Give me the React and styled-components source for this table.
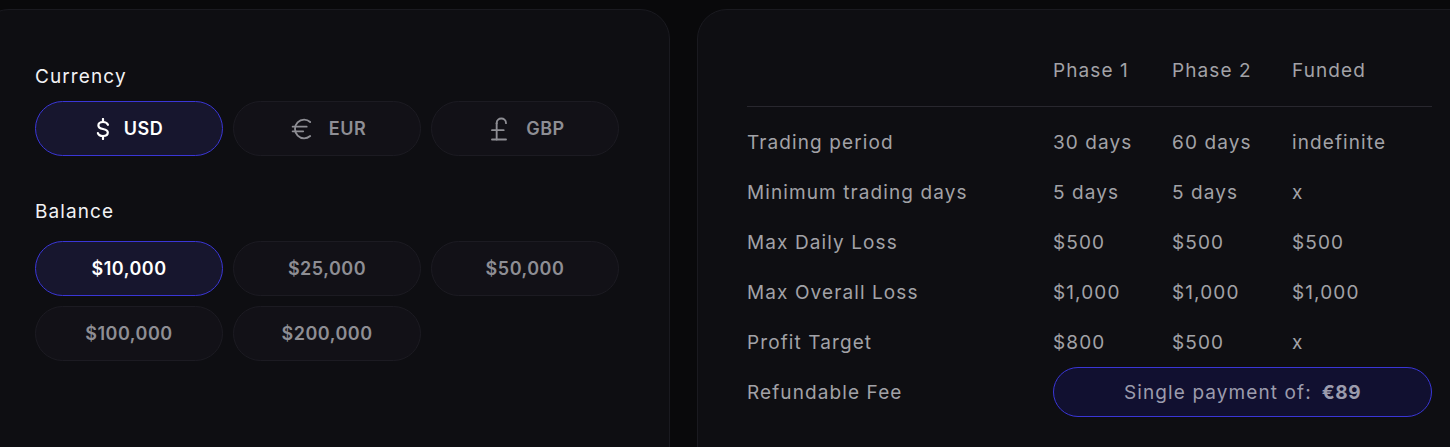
import React, { useState } from 'react';
import styled, { createGlobalStyle } from 'styled-components';
import { Euro, PoundSterling } from 'lucide-react';

const GlobalStyle = createGlobalStyle`
    html, body {
        margin: 0;
        padding: 0;
        background: #09090b;
    }
    body {
        font-family: Inter, "Open Sans", sans-serif;
    }
`;

const Page = styled.div`
    display: flex;
    gap: 27px;
    height: 447px;
    padding-top: 9px;
    margin-left: -21px;
    box-sizing: border-box;
    overflow: hidden;
    width: calc(100% + 21px);
`;

const Card = styled.div`
    flex: none;
    width: ${p => p.width}px;
    height: 480px;
    box-sizing: border-box;
    background: #0e0e12;
    border: 1px solid #1a1a20;
    border-radius: 30px;
    padding: ${p => p.pad};
`;

const Label = styled.div`
    font-size: 19px;
    line-height: 24px;
    color: #f2f2f4;
    letter-spacing: 1.1px;
    margin-bottom: ${p => p.mb}px;
`;

const Section = styled.div`
    margin-bottom: 44px;
`;

const OptionGrid = styled.div`
    display: grid;
    grid-template-columns: repeat(3, 188px);
    gap: 10px;
`;

const Option = styled.button`
    height: 55px;
    box-sizing: border-box;
    border-radius: 28px;
    border: 1px solid ${p => (p.active ? '#3a36d6' : '#1c1b22')};
    background: ${p => (p.active ? '#17162e' : '#121117')};
    color: ${p => (p.active ? '#ffffff' : '#8e8e94')};
    font-family: inherit;
    font-size: 18px;
    font-weight: 600;
    letter-spacing: 0.5px;
    display: flex;
    align-items: center;
    justify-content: center;
    gap: 13px;
    padding: 0;
    cursor: pointer;
`;

const Table = styled.div`
    width: 685px;
    display: grid;
    grid-template-columns: 306px 119px 120px 140px;
    color: #a2a2a7;
    font-size: 19px;
    letter-spacing: 1.1px;
`;

const Head = styled.div`
    line-height: 24px;
    padding-bottom: 23px;
    border-bottom: 1px solid #28272e;
    margin-bottom: 10px;
`;

const Cell = styled.div`
    height: 50px;
    display: flex;
    align-items: center;
`;

const FeePill = styled.div`
    grid-column: 2 / 5;
    height: 50px;
    box-sizing: border-box;
    border-radius: 25px;
    border: 1px solid #3a36d6;
    background: #111030;
    display: flex;
    align-items: center;
    justify-content: center;
    gap: 10px;
    color: #9c9cad;
    font-size: 19px;
`;

const Price = styled.span`
    font-weight: 700;
    letter-spacing: 0.5px;
`;

const DollarIcon = ({ color }) => (
    <svg width="16" height="22" viewBox="0 0 16 22" fill="none" stroke={color} strokeWidth="2.2" strokeLinecap="round">
        <path d="M8 1v3M8 18v3" />
        <path d="M13 6.8C12.3 5 10.5 4 8 4 5.2 4 3.4 5.4 3.4 7.5c0 2.3 2 3 4.6 3.5 2.7.5 4.8 1.3 4.8 3.6 0 2.2-2 3.4-4.8 3.4-2.6 0-4.5-1-5.1-2.9" />
    </svg>
);

const currencies = [
    { code: 'USD', icon: c => <DollarIcon color={c} /> },
    { code: 'EUR', icon: c => <Euro size={28} strokeWidth={1.6} color={c} /> },
    { code: 'GBP', icon: c => <PoundSterling size={28} strokeWidth={1.6} color={c} /> },
];

const balances = ['$10,000', '$25,000', '$50,000', '$100,000', '$200,000'];

const rows = [
    ['Trading period', '30 days', '60 days', 'indefinite'],
    ['Minimum trading days', '5 days', '5 days', 'x'],
    ['Max Daily Loss', '$500', '$500', '$500'],
    ['Max Overall Loss', '$1,000', '$1,000', '$1,000'],
    ['Profit Target', '$800', '$500', 'x'],
];

const App = () => {
    const [currency, setCurrency] = useState('USD');
    const [balance, setBalance] = useState('$10,000');

    return <>
        <GlobalStyle />
        <Page>
            <Card width={691} pad="55px 50px 0 55px">
                <Section>
                    <Label mb={12}>Currency</Label>
                    <OptionGrid>
                        {currencies.map(c => {
                            const active = c.code === currency;
                            return <Option key={c.code} active={active} onClick={() => setCurrency(c.code)}>
                                {c.icon(active ? '#ffffff' : '#8e8e94')}
                                {c.code}
                            </Option>;
                        })}
                    </OptionGrid>
                </Section>
                <Section>
                    <Label mb={17}>Balance</Label>
                    <OptionGrid>
                        {balances.map(b => <Option key={b} active={b === balance} onClick={() => setBalance(b)}>
                            {b}
                        </Option>)}
                    </OptionGrid>
                </Section>
            </Card>
            <Card width={800} pad="49px 0 0 49px">
                <Table>
                    <Head />
                    <Head>Phase 1</Head>
                    <Head>Phase 2</Head>
                    <Head>Funded</Head>
                    {rows.map(r => r.map((v, i) => <Cell key={r[0] + i}>{v}</Cell>))}
                    <Cell>Refundable Fee</Cell>
                    <FeePill>Single payment of: <Price>€89</Price></FeePill>
                </Table>
            </Card>
        </Page>
    </>;
};

export default App;
